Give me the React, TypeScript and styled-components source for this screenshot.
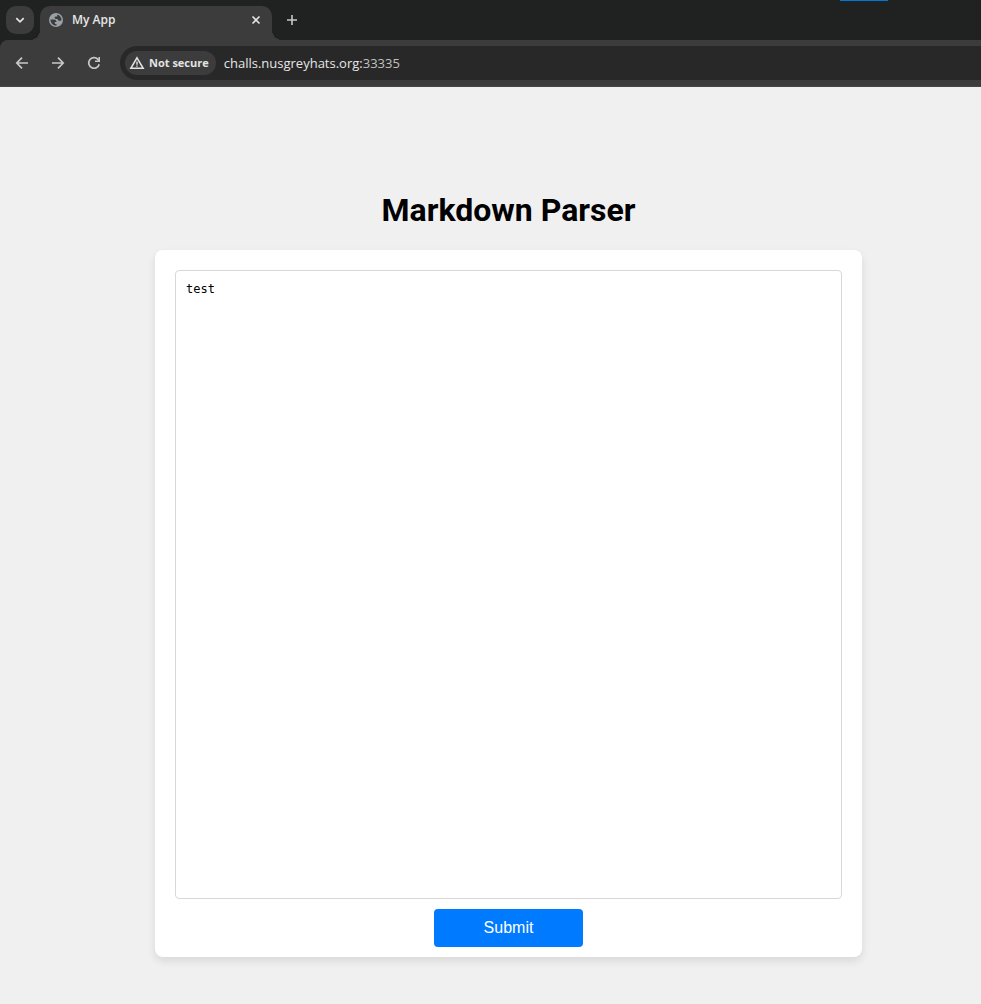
import React, { useState } from "react";
import styled, { createGlobalStyle } from "styled-components";

const GlobalStyle = createGlobalStyle`
  *, *::before, *::after { box-sizing: border-box; }
  body {
    margin: 0;
    background: #f0f0f0;
    font-family: Roboto, "Liberation Sans", sans-serif;
  }
  #root { min-height: 100vh; display: flex; flex-direction: column; }
`;

const uiFont = `"Open Sans", "Noto Sans", sans-serif`;

const Browser = styled.header`
  position: relative;
  background: #202221;
  font-family: ${uiFont};
`;

const EdgeAccent = styled.span`
  position: absolute;
  top: 0;
  right: 93px;
  width: 48px;
  height: 1px;
  background: #0078d7;
`;

const TabStrip = styled.div`
  display: flex;
  height: 40px;
  padding: 6px 6px 0;
  gap: 6px;
`;

const IconButton = styled.button<{ $size: number; $filled?: boolean; $bright?: boolean }>`
  display: flex;
  flex: none;
  align-items: center;
  justify-content: center;
  width: ${(p) => p.$size}px;
  height: ${(p) => p.$size}px;
  padding: 0;
  border: 0;
  border-radius: 10px;
  background: ${(p) => (p.$filled ? "#3c3c3c" : "transparent")};
  color: ${(p) => (p.$bright ? "#e3e3e3" : "#c7c7c7")};
`;

const Tab = styled.div`
  position: relative;
  display: flex;
  align-items: center;
  width: 232px;
  height: 34px;
  padding: 0 6px 6px 8px;
  gap: 8px;
  border-radius: 10px 10px 0 0;
  background: #3c3c3c;

  &::before,
  &::after {
    content: "";
    position: absolute;
    bottom: 0;
    width: 10px;
    height: 10px;
  }
  &::before {
    right: 100%;
    background: radial-gradient(circle at 0 0, transparent 10px, #3c3c3c 10px);
  }
  &::after {
    left: 100%;
    background: radial-gradient(circle at 100% 0, transparent 10px, #3c3c3c 10px);
  }
`;

const TabTitle = styled.span`
  flex: 1;
  color: #e6e6e6;
  font-size: 12px;
  font-weight: 600;
  line-height: 16px;
`;

const Toolbar = styled.div`
  display: flex;
  align-items: center;
  height: 47px;
  padding: 0 0 1px 8px;
  gap: 8px;
  border-bottom: 1px solid #474747;
  border-top-left-radius: 8px;
  background: #3c3c3c;
`;

const AddressBar = styled.div`
  display: flex;
  flex: 1;
  align-items: center;
  height: 34px;
  margin-left: 4px;
  padding-left: 5px;
  gap: 8px;
  border-radius: 17px 0 0 17px;
  background: #282828;
`;

const SecurityChip = styled.button`
  display: flex;
  flex: none;
  align-items: center;
  height: 24px;
  padding: 0 7px 0 4px;
  gap: 4px;
  border: 0;
  border-radius: 12px;
  background: #3c3c3c;
  color: #e3e3e3;
  font: 700 11px/16px ${uiFont};
  white-space: nowrap;
`;

const Url = styled.div`
  color: #e6e6e6;
  font-size: 13px;
  line-height: 18px;
  white-space: nowrap;
`;

const Port = styled.span`
  color: #c0c0c0;
`;

const Page = styled.main`
  display: flex;
  flex: 1;
  flex-direction: column;
  align-items: center;
  padding: 104px 119px 47px 155px;
`;

const Title = styled.h1`
  margin: 0 0 21px;
  color: #000;
  font-size: 32px;
  font-weight: 700;
  line-height: 38px;
`;

const Card = styled.form`
  display: flex;
  flex: 1;
  flex-direction: column;
  align-items: center;
  width: 100%;
  padding: 20px 20px 10px;
  gap: 10px;
  border-radius: 8px;
  background: #fff;
  box-shadow: 0 4px 8px rgba(0, 0, 0, 0.1);
`;

const Editor = styled.textarea`
  display: block;
  flex: 1;
  width: 100%;
  min-height: 240px;
  padding: 10px;
  border: 1px solid #d8d8d8;
  border-radius: 4px;
  outline: 0;
  resize: none;
  background: #fff;
  color: #000;
  font: 12px/16px "DejaVu Sans Mono", monospace;
`;

const SubmitButton = styled.button`
  padding: 10px 50px;
  border: 0;
  border-radius: 4px;
  background: #007bff;
  color: #fff;
  font: 16px/18px "Liberation Sans", Arial, sans-serif;
`;

const Stroke = ({ d, width = 1.7 }: { d: string; width?: number }) => (
  <svg width="16" height="16" viewBox="0 0 16 16" fill="none" stroke="currentColor" strokeWidth={width} aria-hidden="true">
    <path d={d} />
  </svg>
);

const Globe = () => (
  <svg width="16" height="16" viewBox="0 0 16 16" aria-hidden="true">
    <circle cx="8" cy="8" r="7" fill="#9aa0a6" />
    <path
      d="M2.500 7.500H6c1.500 0 2.500 1 2.500 2.500H6.800v1.200c0 .5.300.8.800.8h.9v1.500C5 13.800 2.300 11 2.500 7.500z"
      fill="#3c3c3c"
    />
    <path
      d="M9.200 2.600c2.500.5 4.300 2.700 4.300 5.400-.6.800-1.500 1-2.400.8-1-.2-1.400-.9-1.400-1.800H7.600C6.300 6.600 6.300 4.700 7.800 4.600h1.400z"
      fill="#3c3c3c"
    />
  </svg>
);

const Reload = () => (
  <svg width="16" height="16" viewBox="0 0 16 16" aria-hidden="true">
    <path d="M13.200 9.200A5.300 5.300 0 1 1 11.900 4.300L13 5.500" fill="none" stroke="currentColor" strokeWidth="1.700" />
    <path d="M14 2v5H9V5.400h3.400V2z" fill="currentColor" />
  </svg>
);

const Warning = () => (
  <svg width="16" height="16" viewBox="0 0 16 16" fill="none" stroke="currentColor" aria-hidden="true">
    <path d="M8 2.800L14.200 13.300H1.800z" strokeWidth="1.500" />
    <path d="M8 6.500v3.200M8 10.500v1.300" strokeWidth="1.400" />
  </svg>
);

export default function App() {
  const [source, setSource] = useState("test");
  return (
    <>
      <GlobalStyle />
      <Browser>
        <EdgeAccent />
        <TabStrip>
          <IconButton $size={28} $filled $bright aria-label="Search tabs">
            <Stroke d="M4.300 6.200L8 9.900l3.700-3.700" />
          </IconButton>
          <Tab>
            <Globe />
            <TabTitle>My App</TabTitle>
            <IconButton $size={20} $bright aria-label="Close tab">
              <Stroke d="M4.500 4.500l7 7M11.500 4.500l-7 7" width={1.6} />
            </IconButton>
          </Tab>
          <IconButton $size={28} aria-label="New tab">
            <Stroke d="M8 3v10M3 8h10" width={1.6} />
          </IconButton>
        </TabStrip>
        <Toolbar>
          <IconButton $size={28} aria-label="Back">
            <Stroke d="M14 8H3M8 2.700L2.800 8 8 13.300" />
          </IconButton>
          <IconButton $size={28} aria-label="Forward">
            <Stroke d="M2 8h11M8 2.700L13.200 8 8 13.300" />
          </IconButton>
          <IconButton $size={28} aria-label="Reload">
            <Reload />
          </IconButton>
          <AddressBar>
            <SecurityChip>
              <Warning />
              Not secure
            </SecurityChip>
            <Url>
              challs.nusgreyhats.org:<Port>33335</Port>
            </Url>
          </AddressBar>
        </Toolbar>
      </Browser>
      <Page>
        <Title>Markdown Parser</Title>
        <Card onSubmit={(e) => e.preventDefault()}>
          <Editor aria-label="Markdown" value={source} onChange={(e) => setSource(e.target.value)} spellCheck={false} />
          <SubmitButton type="submit">Submit</SubmitButton>
        </Card>
      </Page>
    </>
  );
}
